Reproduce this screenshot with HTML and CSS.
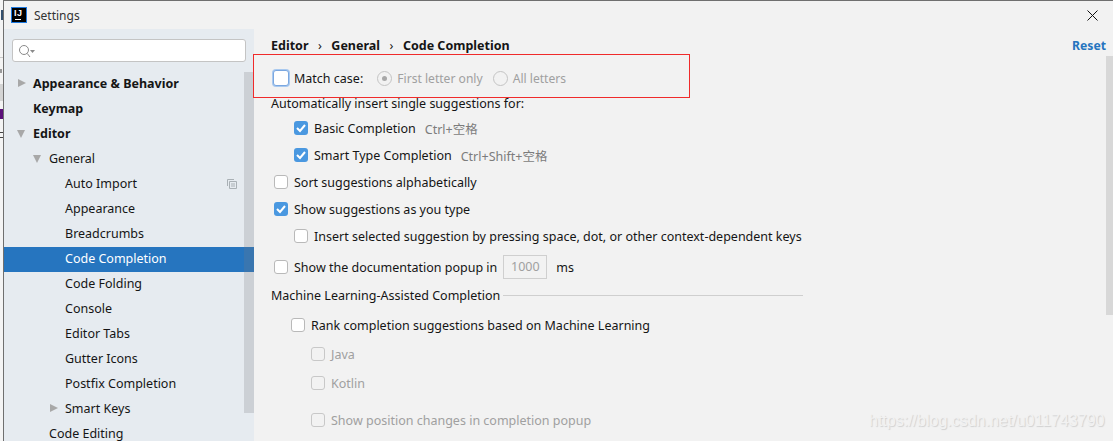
FILE: index.html
```html
<!DOCTYPE html>
<html lang="en">
<head>
    <meta charset="UTF-8">
    <title>Settings</title>
    <link rel="stylesheet" href="styles.css">
</head>
<body>
    <div class="desktop">
        <div class="behind">
            <div class="behind-top"></div>
            <div class="behind-line"></div>
            <div class="behind-mark"></div>
            <div class="behind-a"></div>
            <div class="behind-b"></div>
            <div class="behind-c"></div>
        </div>
        <div class="window">
            <div class="titlebar">
                <div class="app-logo"><span class="app-logo-text">IJ</span><span class="app-logo-bar"></span></div>
                <span class="title">Settings</span>
                <svg class="close" width="11" height="11" viewBox="0 0 11 11"><path d="M.5.5l10 10M10.5.5l-10 10" stroke="#111" stroke-width="1" fill="none"/></svg>
            </div>
            <div class="main">
                <aside class="sidebar">
                    <div class="search">
                        <svg width="18" height="14" viewBox="0 0 18 14"><circle cx="6" cy="6" r="4.5" fill="none" stroke="#8a8a8a"/><path d="M9.2 9.4L12 13" stroke="#8a8a8a" fill="none"/><path d="M12 6h5l-2.5 3z" fill="#8a8a8a"/></svg>
                    </div>
                    <div class="tree-wrap">
                        <ul class="tree">
                            <li class="row bold lvl0"><i class="arrow right"></i>Appearance &amp; Behavior</li>
                            <li class="row bold lvl0">Keymap</li>
                            <li class="row bold lvl0"><i class="arrow down"></i>Editor</li>
                            <li class="row lvl1"><i class="arrow down"></i>General</li>
                            <li class="row lvl2">Auto Import
                                <svg class="copy-icon" width="10" height="10" viewBox="0 0 10 10"><path d="M.5 7V.5H7M2.5 2.5h7v7h-7zM4 5h4M4 7h4" fill="none" stroke="#a9b0b5"/></svg>
                            </li>
                            <li class="row lvl2">Appearance</li>
                            <li class="row lvl2">Breadcrumbs</li>
                            <li class="row lvl2 selected">Code Completion</li>
                            <li class="row lvl2">Code Folding</li>
                            <li class="row lvl2">Console</li>
                            <li class="row lvl2">Editor Tabs</li>
                            <li class="row lvl2">Gutter Icons</li>
                            <li class="row lvl2">Postfix Completion</li>
                            <li class="row lvl2"><i class="arrow right"></i>Smart Keys</li>
                            <li class="row lvl1">Code Editing</li>
                        </ul>
                        <div class="side-scroll"></div>
                    </div>
                </aside>
                <section class="content">
                    <header class="crumbs">
                        <span>Editor</span><em>›</em><span>General</span><em>›</em><span>Code Completion</span>
                        <a class="reset">Reset</a>
                    </header>
                    <div class="opt match-row">
                        <span class="box focused"></span><span class="match-label">Match case:</span>
                        <span class="radio on"></span><span class="off-text">First letter only</span>
                        <span class="radio"></span><span class="off-text">All letters</span>
                    </div>
                    <div class="opt auto-row">Automatically insert single suggestions for:</div>
                    <div class="opt in1 basic-row"><span class="box checked"></span>Basic Completion<span class="keys">Ctrl+空格</span></div>
                    <div class="opt in1 smart-row"><span class="box checked"></span>Smart Type Completion<span class="keys">Ctrl+Shift+空格</span></div>
                    <div class="opt in0 sort-row"><span class="box"></span>Sort suggestions alphabetically</div>
                    <div class="opt in0 show-row"><span class="box checked"></span>Show suggestions as you type</div>
                    <div class="opt in1 insert-row"><span class="box"></span>Insert selected suggestion by pressing space, dot, or other context-dependent keys</div>
                    <div class="opt in0 doc-row"><span class="box"></span>Show the documentation popup in<span class="num">1000</span><span class="ms">ms</span></div>
                    <div class="opt group-row">Machine Learning-Assisted Completion<span class="rule"></span></div>
                    <div class="opt in-rank rank-row"><span class="box"></span>Rank completion suggestions based on Machine Learning</div>
                    <div class="opt in1b off java-row"><span class="box"></span>Java</div>
                    <div class="opt in1b off kotlin-row"><span class="box"></span>Kotlin</div>
                    <div class="opt in1b off pos-row"><span class="box"></span>Show position changes in completion popup</div>
                    <div class="content-scroll"></div>
                </section>
            </div>
        </div>
        <div class="red-box"></div>
        <div class="watermark">https://blog.csdn.net/u011743790</div>
    </div>
</body>
</html>
```

FILE: styles.css
```css
* {
    box-sizing: border-box;
}
html, body {
    margin: 0;
    height: 100%;
    overflow: hidden;
}
body {
    font-family: "Noto Sans", "Noto Sans CJK SC", sans-serif;
    font-size: 12.5px;
    color: #151515;
}
.desktop {
    position: relative;
    display: flex;
    width: 1113px;
    height: 441px;
}
.behind {
    width: 3px;
    background-color: #f4f4f4;
    padding-top: 10px;
}
.behind-top {
    height: 10px;
    width: 2px;
    margin-left: 1px;
    background-color: #34506e;
}
.behind-line {
    height: 1px;
    margin-top: 37px;
    background-color: #c9c9c9;
}
.behind-mark {
    height: 4px;
    width: 2px;
    margin-top: 11px;
    background-color: #9a9a9a;
}
.behind-a {
    height: 17px;
    margin-top: 11px;
    background-color: #d4d4d4;
}
.behind-b {
    height: 10px;
    margin-top: 8px;
    background-color: #5b0f7a;
}
.behind-c {
    height: 6px;
    margin-top: 13px;
    border-top: 1px solid #444;
    border-bottom: 1px solid #444;
}
.window {
    flex: 1;
    border-left: 1px solid #6f6f6f;
    border-top: 1px solid #6f6f6f;
    background-color: #f2f2f2;
    display: flex;
    flex-direction: column;
    min-width: 0;
}
.titlebar {
    height: 28px;
    display: flex;
    align-items: center;
    padding-left: 7px;
    flex-shrink: 0;
}
.app-logo {
    position: relative;
    width: 16px;
    height: 16px;
    background-color: #000;
    border: 1px solid #1f7ae0;
    margin-right: 7px;
}
.app-logo-text {
    position: absolute;
    left: 2px;
    top: 1px;
    color: #fff;
    font-family: "Liberation Sans", sans-serif;
    font-size: 9px;
    font-weight: 700;
    letter-spacing: 0.5px;
    line-height: 9px;
}
.app-logo-bar {
    position: absolute;
    left: 3px;
    bottom: 2px;
    width: 6px;
    height: 1px;
    background-color: #fff;
}
.title {
    font-size: 12px;
    color: #333;
}
.close {
    margin-left: auto;
    margin-right: 15px;
}
.main {
    flex: 1;
    display: flex;
    min-height: 0;
}
.sidebar {
    width: 250px;
    background-color: #e6ebf0;
    flex-shrink: 0;
    padding-top: 10px;
}
.search {
    width: 234px;
    height: 23px;
    margin-left: 8px;
    background-color: #fff;
    border: 1px solid #c4c4c4;
    border-radius: 3px;
    display: flex;
    align-items: center;
    padding-left: 5px;
}
.tree-wrap {
    position: relative;
}
.tree {
    list-style: none;
    margin: 0;
    padding: 10px 0 0;
}
.row {
    position: relative;
    height: 25px;
    line-height: 24px;
    white-space: nowrap;
}
.bold {
    font-weight: 700;
}
.lvl0 {
    padding-left: 29px;
}
.lvl1 {
    padding-left: 45px;
}
.lvl2 {
    padding-left: 61px;
}
.selected {
    background-color: #2675bf;
    color: #fff;
}
.arrow {
    position: absolute;
    width: 0;
    height: 0;
}
.arrow.right {
    margin-left: -15px;
    margin-top: 7px;
    border-left: 8px solid #a8a8a8;
    border-top: 4px solid transparent;
    border-bottom: 4px solid transparent;
}
.arrow.down {
    margin-left: -16px;
    margin-top: 8px;
    border-top: 8px solid #a8a8a8;
    border-left: 4px solid transparent;
    border-right: 4px solid transparent;
}
.copy-icon {
    position: absolute;
    right: 17px;
    top: 7px;
}
.side-scroll {
    position: absolute;
    right: 0;
    top: 10px;
    width: 10px;
    height: 341px;
    background-color: rgba(120, 120, 130, 0.24);
}
.content {
    position: relative;
    flex: 1;
    min-width: 0;
    padding-left: 17px;
    white-space: nowrap;
}
.crumbs {
    display: flex;
    align-items: center;
    height: 20px;
    margin-top: 6px;
    font-weight: 700;
}
.crumbs em {
    font-style: normal;
    font-weight: 400;
    margin: 0 9.5px;
}
.reset {
    position: absolute;
    right: 7px;
    top: 7px;
    color: #2675bf;
    font-size: 12.2px;
    line-height: 20px;
}
.opt {
    display: flex;
    align-items: center;
    height: 20px;
}
.box {
    width: 14px;
    height: 14px;
    margin-right: 6px;
    border: 1px solid #b9b9b9;
    border-radius: 3px;
    background-color: #fff;
    flex-shrink: 0;
}
.box.checked {
    border: 0;
    background: #4a98e0 url("data:image/svg+xml,%3Csvg xmlns='http://www.w3.org/2000/svg' width='14' height='14'%3E%3Cpath d='M3 7l3 3 5-6' fill='none' stroke='white' stroke-width='2'/%3E%3C/svg%3E");
}
.box.focused {
    width: 16px;
    height: 16px;
    margin-right: 5px;
    border: 1px solid #7aa7e0;
    box-shadow: 0 0 0 1px #a9c9ef;
}
.match-row {
    margin-top: 13px;
    padding-left: 2px;
}
.match-label {
    margin-right: 14px;
}
.radio {
    width: 15px;
    height: 15px;
    border: 1px solid #c4c4c4;
    border-radius: 50%;
    margin-right: 5px;
    flex-shrink: 0;
    display: flex;
    align-items: center;
    justify-content: center;
}
.radio.on::after {
    content: "";
    width: 5px;
    height: 5px;
    border-radius: 50%;
    background-color: #a8a8a8;
}
.off-text {
    color: #a0a0a0;
    font-size: 12.1px;
    margin-right: 10px;
}
.auto-row {
    margin-top: 5px;
}
.in0 {
    padding-left: 3px;
}
.in1 {
    padding-left: 23px;
}
.in-rank {
    padding-left: 20px;
}
.in1b {
    padding-left: 40px;
}
.off {
    color: #a0a0a0;
}
.off .box {
    background-color: transparent;
    border-color: #c8c8c8;
}
.keys {
    color: #7c7c7c;
    margin-left: 9px;
    font-size: 12.5px;
}
.basic-row {
    margin-top: 5px;
}
.smart-row, .sort-row, .show-row, .insert-row {
    margin-top: 7px;
}
.doc-row {
    margin-top: 9px;
    height: 24px;
}
.num {
    width: 44px;
    height: 24px;
    line-height: 22px;
    margin-left: 6px;
    border: 1px solid #cfcfcf;
    color: #a0a0a0;
    text-align: center;
}
.ms {
    margin-left: 9px;
}
.group-row {
    margin-top: 6px;
}
.rule {
    width: 300px;
    height: 1px;
    margin-left: 3px;
    background-color: #cfcfcf;
}
.rank-row {
    margin-top: 10px;
}
.java-row, .kotlin-row {
    margin-top: 9px;
}
.pos-row {
    margin-top: 17px;
}
.content-scroll {
    position: absolute;
    right: 0;
    top: 27px;
    width: 7px;
    height: 259px;
    background-color: #d8d8d8;
}
.red-box {
    position: absolute;
    left: 253px;
    top: 54px;
    width: 437px;
    height: 44px;
    border: 1px solid #f02b2b;
}
.watermark {
    position: absolute;
    left: 869px;
    top: 412px;
    font-family: "Liberation Sans", sans-serif;
    font-size: 16px;
    color: #f2f2f2;
    text-shadow: 1px 1px 1px #d0d0d0;
}
```
